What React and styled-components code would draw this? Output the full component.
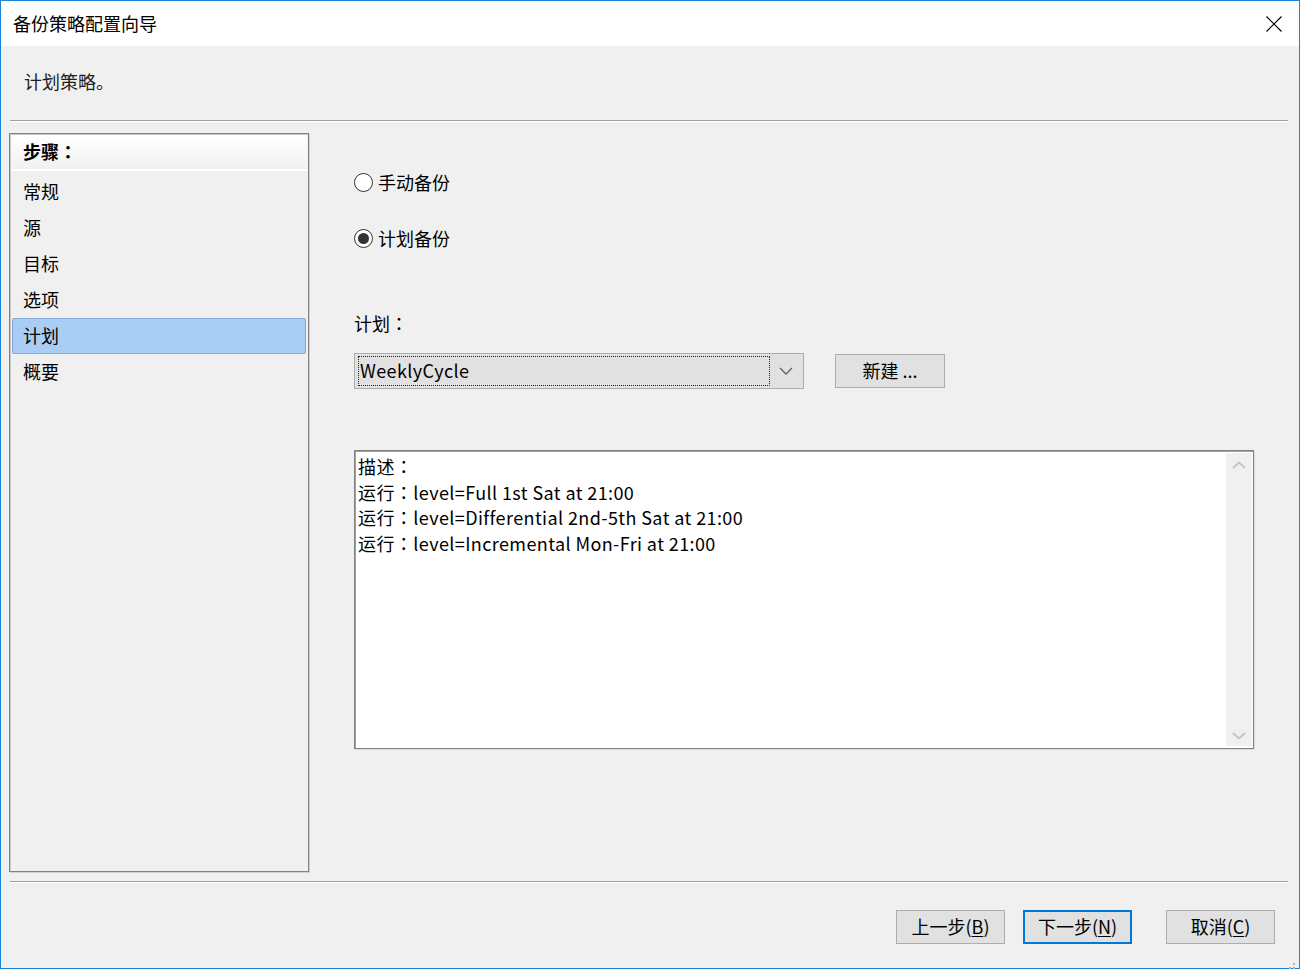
import React from "react";
import styled, { createGlobalStyle } from "styled-components";

const Global = createGlobalStyle`
  html, body { margin: 0; padding: 0; background: #f0f0f0; }
  * { box-sizing: border-box; }
  body {
    font-family: "Noto Sans CJK SC", "Noto Sans", sans-serif;
    font-size: 18px;
    color: #000;
  }
`;

const Window = styled.div`
  width: 1300px;
  height: 969px;
  border: 1px solid #1c84d8;
  background: #f0f0f0;
  display: flex;
  flex-direction: column;
  position: relative;
`;

const TitleBar = styled.div`
  height: 45px;
  flex: none;
  background: #fff;
  display: flex;
  align-items: center;
  justify-content: space-between;
  padding: 0 16px 2px 12px;
`;

const Title = styled.div`
  font-size: 18px;
  line-height: 20px;
`;

const CloseBtn = styled.div`
  width: 18px;
  height: 18px;
  display: flex;
  align-items: center;
  justify-content: center;
  margin-top: 2px;
`;

const Colon = styled.span`
  font-family: "Noto Sans CJK TC", "Noto Sans CJK SC", sans-serif;
`;

const Subtitle = styled.div`
  height: 74px;
  flex: none;
  display: flex;
  align-items: center;
  padding: 0 0 4px 23px;
  font-size: 18px;
  color: #1e1e1e;
`;

const Separator = styled.div`
  flex: none;
  height: 2px;
  margin: ${(p) => p.$mt || 0}px 11px 0 9px;
  border-top: 1px solid #a0a0a0;
  border-bottom: 1px solid #ffffff;
`;

const Main = styled.div`
  flex: none;
  display: flex;
  padding: 11px 0 0 8px;
  height: 750px;
`;

const StepPanel = styled.div`
  width: 300px;
  height: 739px;
  flex: none;
  border: 1px solid #828282;
  box-shadow: inset 1px 1px 0 #c8c8c8, 1px 1px 0 #d0d0d0;
  display: flex;
  flex-direction: column;
  background: #f0f0f0;
`;

const StepHeader = styled.div`
  height: 36px;
  flex: none;
  display: flex;
  align-items: center;
  padding: 0 0 3px 12px;
  font-weight: bold;
  background: linear-gradient(#ffffff, #f1f1f1);
  border-bottom: 2px solid #ffffff;
  margin: 1px 1px 0 1px;
`;

const StepList = styled.div`
  display: flex;
  flex-direction: column;
  padding: 3px 2px 0 2px;
`;

const StepItem = styled.div`
  height: 36px;
  display: flex;
  align-items: center;
  padding: 0 0 3px ${(p) => (p.$active ? "10px" : "11px")};
  background: ${(p) => (p.$active ? "#aacdf6" : "transparent")};
  border: ${(p) => (p.$active ? "1px solid #84a9d6" : "none")};
  border-radius: 2px;
`;

const Content = styled.div`
  flex: 1;
  display: flex;
  flex-direction: column;
  padding-left: 45px;
`;

const RadioRow = styled.label`
  display: flex;
  align-items: center;
  gap: 5px;
  height: 22px;
  margin-top: ${(p) => p.$mt}px;
`;

const RadioCircle = styled.span`
  width: 19px;
  height: 19px;
  border-radius: 50%;
  border: 1px solid #333;
  background: #fff;
  display: flex;
  align-items: center;
  justify-content: center;
  &::after {
    content: "";
    display: ${(p) => (p.$checked ? "block" : "none")};
    width: 11px;
    height: 11px;
    border-radius: 50%;
    background: #333;
  }
`;

const FieldLabel = styled.div`
  margin-top: 62px;
  height: 24px;
  display: flex;
  align-items: center;
`;

const ComboRow = styled.div`
  display: flex;
  align-items: center;
  margin-top: 18px;
  gap: 31px;
`;

const Combo = styled.div`
  width: 450px;
  height: 36px;
  border: 1px solid #adadad;
  background: #e1e1e1;
  display: flex;
  align-items: center;
  padding: 2px 3px;
`;

const ComboText = styled.div`
  flex: 1;
  height: 30px;
  border: 1px dotted #222;
  display: flex;
  align-items: center;
  padding: 0 0 2px 1px;
  font-size: 18px;
  letter-spacing: 0.4px;
`;

const ComboArrow = styled.div`
  width: 30px;
  display: flex;
  justify-content: center;
  align-items: center;
  padding-left: 2px;
`;

const Button = styled.div`
  width: ${(p) => p.$w || 109}px;
  height: ${(p) => p.$h || 34}px;
  border: ${(p) => (p.$primary ? "2px solid #0078d7" : "1px solid #adadad")};
  background: #e1e1e1;
  display: flex;
  align-items: center;
  justify-content: center;
  padding-bottom: 2px;
  font-size: 18px;
  flex: none;
`;

const U = styled.span`
  text-decoration: underline;
  text-underline-offset: 2px;
`;

const DescBox = styled.div`
  margin-top: 61px;
  width: 900px;
  height: 299px;
  border: 1px solid #828282;
  box-shadow: inset 1px 1px 0 #a0a0a0, 1px 1px 0 #dcdcdc;
  background: #fff;
  display: flex;
`;

const DescText = styled.div`
  flex: 1;
  padding: 3px 0 0 3px;
  line-height: 25.6px;
  font-size: 18px;
  letter-spacing: 0.4px;
`;

const ScrollBar = styled.div`
  width: 26px;
  margin: 2px 1px 2px 0;
  background: #f0f0f0;
  display: flex;
  flex-direction: column;
  justify-content: space-between;
  align-items: center;
  padding: 8px 0 6px;
`;

const Footer = styled.div`
  flex: 1;
  display: flex;
  flex-direction: column;
`;

const ButtonBar = styled.div`
  display: flex;
  justify-content: flex-end;
  align-items: center;
  padding: 27px 24px 0 0;
`;

const Spacer = styled.div`
  width: ${(p) => p.$w}px;
`;

const Grip = styled.div`
  position: absolute;
  right: 3px;
  bottom: 3px;
  width: 12px;
  height: 12px;
`;

const Chevron = ({ up, color = "#c4c4c4" }) => (
  <svg width="14" height="8" viewBox="0 0 14 8">
    <polyline
      points={up ? "1,7 7,1.5 13,7" : "1,1 7,6.5 13,1"}
      fill="none"
      stroke={color}
      strokeWidth="2"
    />
  </svg>
);

const steps = ["常规", "源", "目标", "选项", "计划", "概要"];

const runs = [
  "level=Full 1st Sat at 21:00",
  "level=Differential 2nd-5th Sat at 21:00",
  "level=Incremental Mon-Fri at 21:00",
];

export default function App() {
  return (
    <>
      <Global />
      <Window>
        <TitleBar>
          <Title>备份策略配置向导</Title>
          <CloseBtn>
            <svg width="16" height="16" viewBox="0 0 16 16">
              <path d="M0.5 0.5 L15.5 15.5 M15.5 0.5 L0.5 15.5" stroke="#000" strokeWidth="1.2" />
            </svg>
          </CloseBtn>
        </TitleBar>
        <Subtitle>计划策略。</Subtitle>
        <Separator />
        <Main>
          <StepPanel>
            <StepHeader>
              步骤<Colon>：</Colon>
            </StepHeader>
            <StepList>
              {steps.map((s) => (
                <StepItem key={s} $active={s === "计划"}>
                  {s}
                </StepItem>
              ))}
            </StepList>
          </StepPanel>
          <Content>
            <RadioRow $mt={38}>
              <RadioCircle />
              手动备份
            </RadioRow>
            <RadioRow $mt={34}>
              <RadioCircle $checked />
              计划备份
            </RadioRow>
            <FieldLabel>
              计划<Colon>：</Colon>
            </FieldLabel>
            <ComboRow>
              <Combo>
                <ComboText>WeeklyCycle</ComboText>
                <ComboArrow>
                  <svg width="14" height="8" viewBox="0 0 14 8">
                    <polyline points="1,1 7,7 13,1" fill="none" stroke="#606060" strokeWidth="1.3" />
                  </svg>
                </ComboArrow>
              </Combo>
              <Button $w={110}>新建 ...</Button>
            </ComboRow>
            <DescBox>
              <DescText>
                <div>
                  描述<Colon>：</Colon>
                </div>
                {runs.map((r) => (
                  <div key={r}>
                    运行<Colon>：</Colon>
                    {r}
                  </div>
                ))}
              </DescText>
              <ScrollBar>
                <Chevron up />
                <Chevron />
              </ScrollBar>
            </DescBox>
          </Content>
        </Main>
        <Footer>
          <Separator $mt={9} />
          <ButtonBar>
            <Button>
              上一步(<U>B</U>)
            </Button>
            <Spacer $w={18} />
            <Button $primary>
              下一步(<U>N</U>)
            </Button>
            <Spacer $w={34} />
            <Button>
              取消(<U>C</U>)
            </Button>
          </ButtonBar>
        </Footer>
        <Grip>
          <svg width="12" height="12" viewBox="0 0 12 12" fill="#b4b4b4">
            <rect x="9" y="1" width="2" height="2" />
            <rect x="5" y="5" width="2" height="2" />
            <rect x="9" y="5" width="2" height="2" />
            <rect x="1" y="9" width="2" height="2" />
            <rect x="5" y="9" width="2" height="2" />
            <rect x="9" y="9" width="2" height="2" />
          </svg>
        </Grip>
      </Window>
    </>
  );
}
